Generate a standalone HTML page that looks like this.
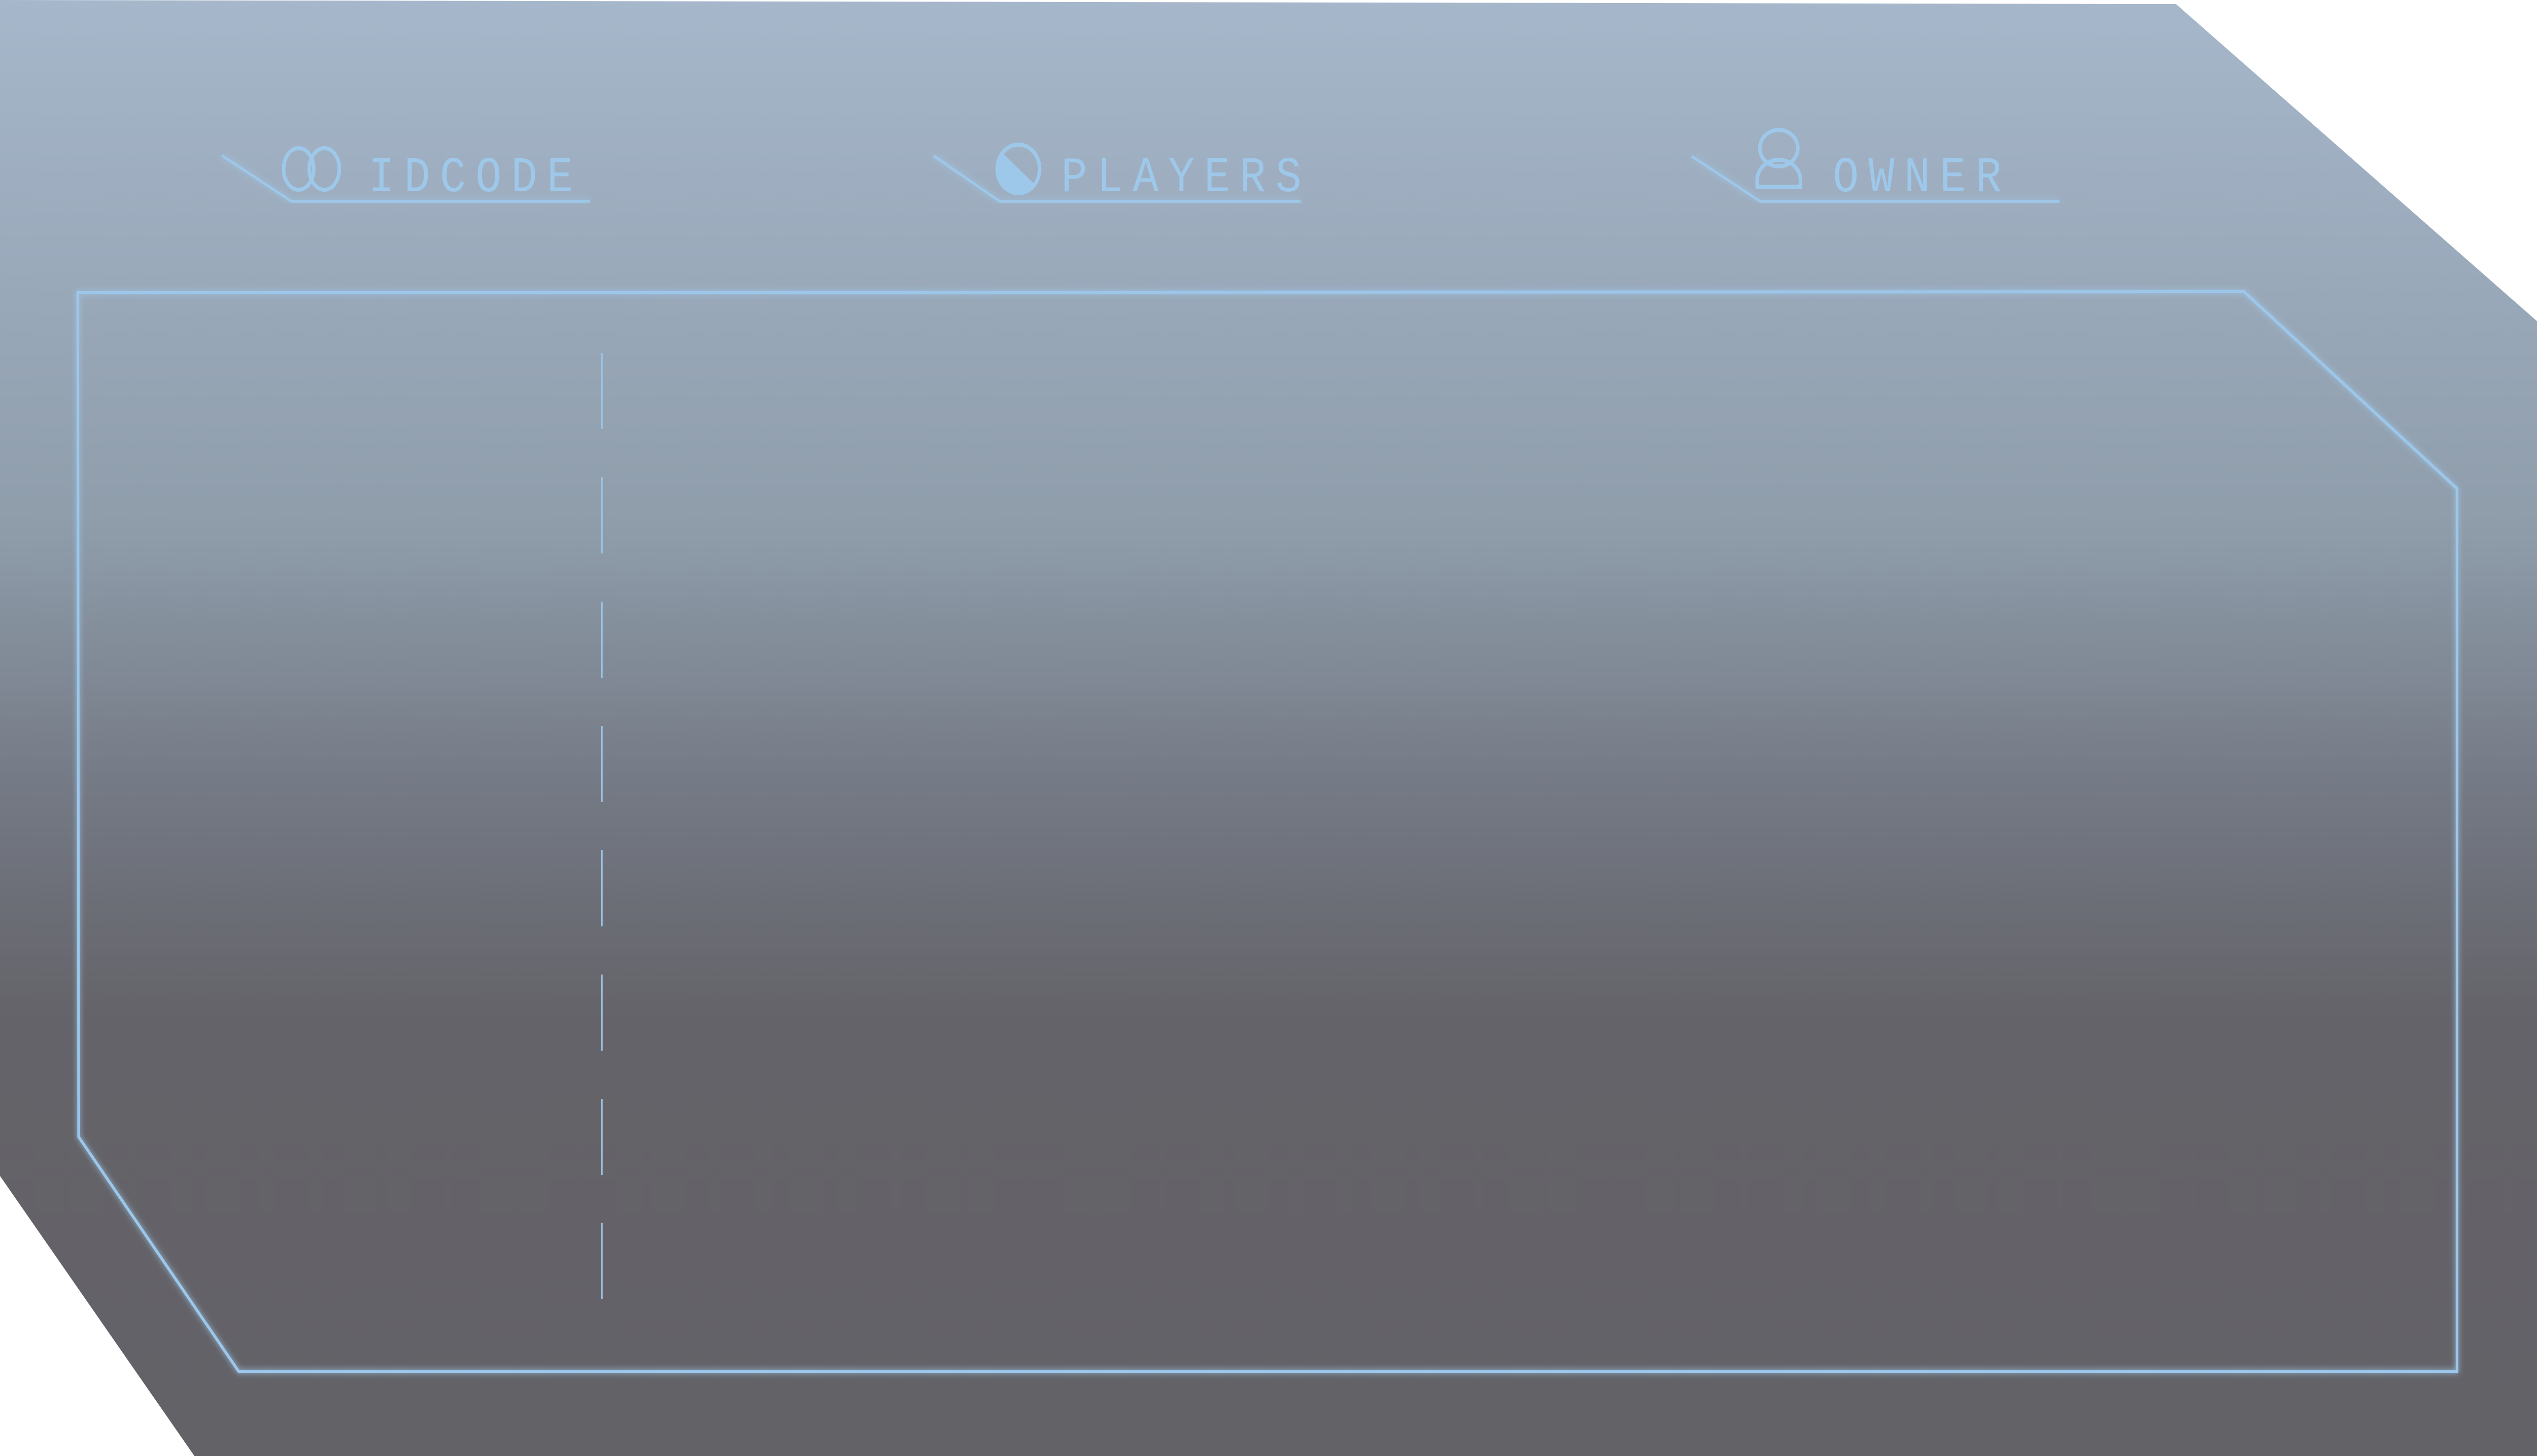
<!DOCTYPE html>
<html><head><meta charset="utf-8"><style>
html,body{margin:0;padding:0;width:100%;height:100%;overflow:hidden;background:#fff}
svg{display:block;width:100vw;height:100vh}
text{font-family:"Liberation Mono",monospace;font-size:98px;fill:#9ec8ea;letter-spacing:22px}
</style></head><body>
<svg viewBox="0 0 5742 2870" preserveAspectRatio="none" xmlns="http://www.w3.org/2000/svg">
<defs>
<linearGradient id="bg" x1="0" y1="0" x2="0" y2="1">
<stop offset="0" stop-color="#a6b7cb"/>
<stop offset="0.36" stop-color="#8f9dab"/>
<stop offset="0.55" stop-color="#737883"/>
<stop offset="0.7" stop-color="#646369"/>
<stop offset="1" stop-color="#636267"/>
</linearGradient>
<filter id="glow" x="-5%" y="-5%" width="110%" height="110%">
<feGaussianBlur stdDeviation="6" result="b"/>
<feMerge><feMergeNode in="b"/><feMergeNode in="SourceGraphic"/></feMerge>
</filter>
</defs>
<polygon points="0,0 4925,8 5742,633 5742,2870 440,2870 0,2318" fill="url(#bg)"/>
<polygon points="176,577 5079,575 5561,963 5561,2703 540,2703 178,2241" fill="none" stroke="#9dc7ea" stroke-width="6" filter="url(#glow)"/>
<line x1="1362" y1="696" x2="1362" y2="2563" stroke="#9cc4e4" stroke-width="4" stroke-dasharray="150 95"/>
<g fill="none" stroke="#9ec8ea" stroke-width="5" filter="url(#glow)">
<polyline points="503,307 660,397 1335,397"/>
<polyline points="2113,307 2263,397 2944,397"/>
<polyline points="3829,308 3984,397 4661,397"/>
</g>
<g fill="none" stroke="#9ec8ea" stroke-width="8">
<ellipse cx="676" cy="333" rx="34" ry="41"/>
<ellipse cx="734" cy="333" rx="34" ry="41"/>
<circle cx="2305" cy="333" r="48"/>
<ellipse cx="4026" cy="292" rx="43" ry="36"/>
<path d="M3977,368 L3977,355 A49,40 0 0 1 4075,355 L4075,368 Z"/>
</g>
<path d="M2340,362 A48,48 0 0 1 2257,333 A48,48 0 0 1 2271,303 Z" fill="#9ec8ea"/>
<text x="834" y="377">IDCODE</text>
<text x="2402" y="377">PLAYERS</text>
<text x="4148" y="377">OWNER</text>
</svg>
</body></html>
